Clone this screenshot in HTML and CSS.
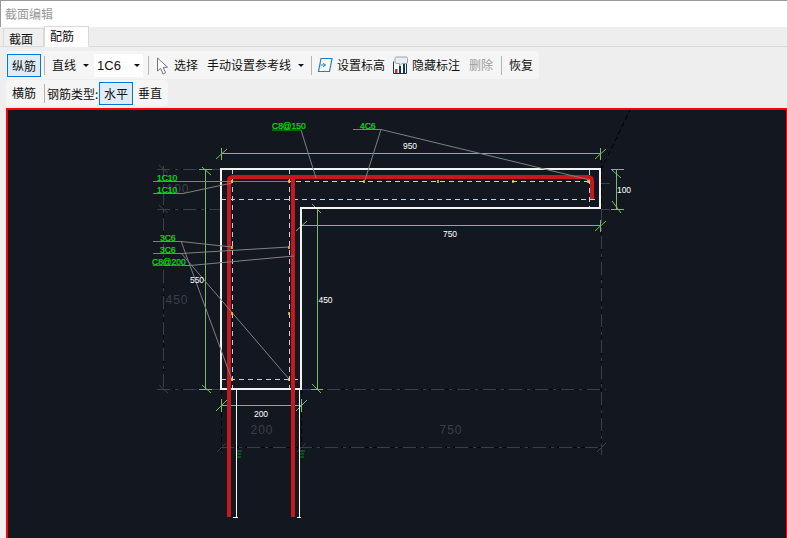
FILE: index.html
```html
<!DOCTYPE html>
<html lang="zh">
<head>
<meta charset="utf-8">
<title>截面编辑</title>
<link rel="stylesheet" href="styles.css">
</head>
<body>
<div class="window">
  <div class="titlebar">截面编辑</div>
  <div class="tabs">
    <div class="tab">截面</div>
    <div class="tab tab-active">配筋</div>
  </div>
  <div class="toolbar toolbar-main">
    <div class="btn btn-on">纵筋</div>
    <span class="sep"></span>
    <div class="tool tool-line">直线<span class="caret"></span></div>
    <div class="combo"><span>1C6</span><span class="caret"></span></div>
    <span class="sep sep-select"></span>
    <svg class="icon icon-cursor" width="13" height="18" viewBox="0 0 13 18">
      <path class="cursor-shape" d="M1.5 1 V14 L4.6 11.4 L7 17 L9.6 15.8 L7.2 10.4 L11.5 10.2 Z"/>
    </svg>
    <div class="tool tool-select">选择</div>
    <div class="tool tool-ref">手动设置参考线<span class="caret"></span></div>
    <span class="sep sep-level"></span>
    <svg class="icon" width="16" height="16" viewBox="0 0 16 16">
      <path class="level-box" d="M4 1.5 H15 L12.5 14.5 H1.5 Z"/>
      <path class="level-mark" d="M3.500 8 H8.500 M6 6 L8.500 8 L6 10"/>
    </svg>
    <div class="tool tool-level">设置标高</div>
    <svg class="icon icon-hide" width="15" height="18" viewBox="0 0 15 18">
      <path class="chart-frame" d="M0.5 5.5 V17.5 H13.5 V7"/>
      <rect class="chart-red" x="2" y="13" width="2.5" height="4"/>
      <rect class="chart-blue" x="6" y="10" width="2" height="7"/>
      <rect class="chart-blue" x="10" y="8" width="2" height="9"/>
      <path class="chart-bubble" d="M3.500 1 H13 Q14.500 1 14.500 2.500 V6 Q14.500 7.500 13 7.500 H9 L6.500 10 V7.500 H3.500 Q2 7.500 2 6 V2.500 Q2 1 3.500 1 Z"/>
    </svg>
    <div class="tool tool-hide">隐藏标注</div>
    <div class="tool tool-del">删除</div>
    <span class="sep sep-restore"></span>
    <div class="tool tool-restore">恢复</div>
  </div>
  <div class="toolbar toolbar-sub">
    <div class="tool tool-cross">横筋</div>
    <span class="sep sep-cross"></span>
    <div class="type-label">钢筋类型:</div>
    <div class="btn btn-on">水平</div>
    <div class="tool tool-vert">垂直</div>
  </div>
  <div class="canvas">
    <svg class="drawing" viewBox="8 110 778 428" width="778" height="428">
      <path class="axis-under" d="M163.500 166 V389 M157 169.500 H221 M157 209.500 H221 M157 389.500 H221 M301 389.500 H606 M221 447.500 H601 M601.500 150 V455 M221.500 389 V455 M301.500 389 V455 M601 170 L630 110"/>
      <path class="axis-over" d="M163.500 166 V389 M157 169.500 H221 M157 209.500 H221 M157 389.500 H221 M301 389.500 H606 M221 447.500 H601 M601.500 210 V455 M601 183.500 H610 M601 209.500 H610"/>
      <path class="axis-tick" d="M159 165 L168 173 M159 205 L168 213 M159 385 L168 393 M217 452 L226 443 M297 452 L306 443 M597 452 L606 443"/>
      <g class="ghost">
        <text x="177" y="304">450</text>
        <text x="178" y="193">100</text>
        <text x="262" y="434">200</text>
        <text x="451" y="434">750</text>
      </g>
      <g class="dim">
        <path d="M221 153.500 H600 M616.500 169 V209 M301 225.500 H600 M317.500 208 V389 M205.500 169 V389 M221 405.500 H301"/>
        <path d="M221.500 148 V160 M216 159 L227 149 M600.500 148 V160 M595 159 L606 149 M301.500 220 V232 M296 231 L307 221 M600.500 220 V232 M595 231 L606 221 M221.500 399 V412 M216 411 L227 400 M301.500 399 V412 M296 411 L307 400 M611 169.500 H624 M612 170 L621 178 M611 209.500 H624 M612 201 L621 213 M310 208.500 H323 M312 204 L321 213 M311 389.500 H323 M312 384 L321 393 M199 169.500 H212 M202 167 L211 175 M199 389.500 H212 M202 385 L211 393"/>
      </g>
      <path class="stirrup" d="M232.500 169 V389 M289.500 169 V389 M233 181.500 H590 M221 199.500 H600 M589.500 170 V209 M221 379.500 H301"/>
      <path class="concrete" d="M221 169 H600 V208 H301 V389 H221 Z"/>
      <path class="bar-white" d="M236.500 389 V517 M299.500 389 V517 M233 517.500 H238 M297 517.500 H301"/>
      <path class="rebar" d="M229 517 V181 Q229 177 233 177 H588 Q592 177 592 181 V199 M293 177 V517"/>
      <path class="bar-mark" d="M237 451 H242 M237 454 H241 M237 457 H241 M300 451 H305 M300 454 H304 M300 457 H304"/>
      <path class="leader" d="M301 130 L316 178 M353 129.500 H381 L365 180 M381 129.500 L590 180 M153 181.500 H290 M153 193.500 H183 L232 183 M153 241.500 H181 L232 247 M153 253.500 H181 L289 247 M153 265.500 H190 L294 256 M181 241 L232 380 M181 253 L289 379"/>
      <path class="dots" d="M232 180 V183 M289 180 V183 M364 180 V183 M438 180 V183 M513 180 V183 M588 180 V183 M232 246 V249 M289 246 V249 M232 312 V315 M289 312 V315 M232 378 V381 M289 378 V381"/>
      <path class="label-rule" d="M272 130 H301 M153 265.500 H182"/>
      <g class="label-green">
        <text x="272" y="129">C8@150</text>
        <text x="360" y="129">4C6</text>
        <text x="157" y="181">1C10</text>
        <text x="157" y="193">1C10</text>
        <text x="160" y="241">3C6</text>
        <text x="160" y="253">3C6</text>
        <text x="152" y="265">C8@200</text>
      </g>
      <g class="label-white">
        <text x="410" y="149">950</text>
        <text x="624" y="193">100</text>
        <text x="450" y="237">750</text>
        <text x="325.500" y="303">450</text>
        <text x="197" y="283">550</text>
        <text x="261" y="417">200</text>
      </g>
    </svg>
  </div>
</div>
</body>
</html>
```

FILE: styles.css
```css
html, body {
  margin: 0;
  padding: 0;
  width: 787px;
  height: 538px;
  overflow: hidden;
  background: #eeeeee;
}

.window {
  box-sizing: border-box;
  width: 787px;
  height: 538px;
  display: flex;
  flex-direction: column;
  background: #eeeeee;
  border-top: 1px solid #9a9a9a;
  font-family: "Noto Sans CJK SC", "Liberation Sans", sans-serif;
  font-size: 12px;
  color: #111111;
}

.titlebar {
  height: 26px;
  flex: none;
  box-sizing: border-box;
  padding: 4px 0 0 4px;
  line-height: 18px;
  background: #ffffff;
  border-left: 1px solid #9a9a9a;
  color: #999999;
}

.tabs {
  height: 20px;
  flex: none;
  display: flex;
  align-items: flex-end;
  box-sizing: border-box;
  padding-left: 3px;
  border-bottom: 1px solid #d9d9d9;
  margin-bottom: 4px;
}

.tab {
  box-sizing: border-box;
  width: 41px;
  height: 19px;
  margin-bottom: -1px;
  padding-left: 5px;
  line-height: 19px;
  background: #f0f0f0;
  border: 1px solid #d9d9d9;
}

.tab-active {
  width: 45px;
  height: 21px;
  padding-left: 5px;
  line-height: 17px;
  background: #ffffff;
  border-bottom-color: #ffffff;
}

.toolbar {
  flex: none;
  display: flex;
  align-items: center;
  align-self: flex-start;
  box-sizing: border-box;
  margin-left: 6px;
  background: #f5f5f5;
  border-radius: 3px;
}

.toolbar-main {
  width: 533px;
  height: 28px;
  padding-left: 1px;
  margin-bottom: 1px;
}

.toolbar-sub {
  width: 162px;
  height: 26px;
  margin-bottom: 2px;
}

.btn {
  box-sizing: border-box;
  width: 34px;
  height: 23px;
  line-height: 21px;
  text-align: center;
  background: #dfebf6;
  border: 1px solid #0078d7;
}

.sep {
  flex: none;
  width: 1px;
  height: 19px;
  margin-left: 3px;
  background: #b4b4b4;
}

.caret {
  display: inline-block;
  width: 0;
  height: 0;
  border-left: 3px solid transparent;
  border-right: 3px solid transparent;
  border-top: 3px solid #111111;
}

.tool {
  flex: none;
  display: flex;
  align-items: center;
  line-height: 20px;
}

.tool-line { margin-left: 7px; }
.tool-line .caret { margin-left: 7px; }

.combo {
  box-sizing: border-box;
  width: 49px;
  height: 23px;
  margin-left: 5px;
  padding: 0 3px 0 3px;
  display: flex;
  align-items: center;
  justify-content: space-between;
  background: #ffffff;
  font-family: "Liberation Sans", sans-serif;
  font-size: 13px;
}

.sep-select { margin-left: 5px; }
.icon { flex: none; display: block; }
.icon-cursor { margin-left: 7px; margin-top: 2px; }
.cursor-shape { fill: #ffffff; stroke: #777777; stroke-width: 1; }
.tool-select { margin-left: 5px; }
.tool-ref { margin-left: 9px; }
.tool-ref .caret { margin-left: 7px; }
.sep-level { margin-left: 7px; }
.sep-level + .icon { margin-left: 5px; }
.level-box { fill: #ffffff; stroke: #1f7fc4; stroke-width: 1.2; }
.level-mark { fill: none; stroke: #1f7fc4; stroke-width: 1; }
.tool-level { margin-left: 4px; }
.icon-hide { margin-left: 8px; }
.chart-frame { fill: #ffffff; stroke: #12365f; stroke-width: 1; }
.chart-red { fill: #c8321e; }
.chart-blue { fill: #12365f; }
.chart-bubble { fill: #e9edf2; stroke: #9aa3ad; stroke-width: 1; }
.tool-hide { margin-left: 4px; }
.tool-del { margin-left: 9px; color: #9c9c9c; }
.sep-restore { margin-left: 8px; }
.tool-restore { margin-left: 7px; }

.tool-cross { margin-left: 6px; }
.sep-cross { margin-left: 8px; }
.type-label { margin-left: 2px; width: 52px; flex: none; white-space: nowrap; }
.tool-vert { margin-left: 5px; }

.canvas {
  flex: 1;
  min-height: 0;
  margin-left: 6px;
  background: #13171f;
  border-top: 2px solid #ff0000;
  border-left: 2px solid #ff0000;
  border-right: 1px solid #ff0000;
  overflow: hidden;
}

.drawing { display: block; }
.drawing path { fill: none; }

.drawing .axis-under { stroke: #000000; stroke-width: 1; stroke-dasharray: 5 3; }
.drawing .axis-over { stroke: #3a404a; stroke-width: 1; stroke-dasharray: 13 5 3 5; }
.drawing .axis-tick { stroke: #3a404a; stroke-width: 1; }
.ghost text {
  fill: #3a404a;
  font-family: "Liberation Sans", sans-serif;
  font-size: 12px;
  letter-spacing: 1px;
  text-anchor: middle;
}
.dim path { stroke: #7fb86a; stroke-width: 1; }
.drawing .concrete { stroke: #f2f2f2; stroke-width: 2; }
.stirrup { stroke: #b9d2ea; stroke-width: 1; stroke-dasharray: 5 4; }
.bar-white { stroke: #ffffff; stroke-width: 1; }
.rebar { stroke: #c8181f; stroke-width: 4; }
.bar-mark { stroke: #0b8a1e; stroke-width: 1; }
.leader { stroke: #808080; stroke-width: 1; }
.dots { stroke: #ffd21e; stroke-width: 1.5; }
.label-rule { stroke: #00b000; stroke-width: 1; }
.label-green text {
  fill: #00e600;
  stroke: #00e600;
  stroke-width: 0.2;
  font-family: "Liberation Sans", sans-serif;
  font-size: 8.500px;
}
.label-white text {
  fill: #ffffff;
  font-family: "Liberation Sans", sans-serif;
  font-size: 8.500px;
  text-anchor: middle;
}
```
